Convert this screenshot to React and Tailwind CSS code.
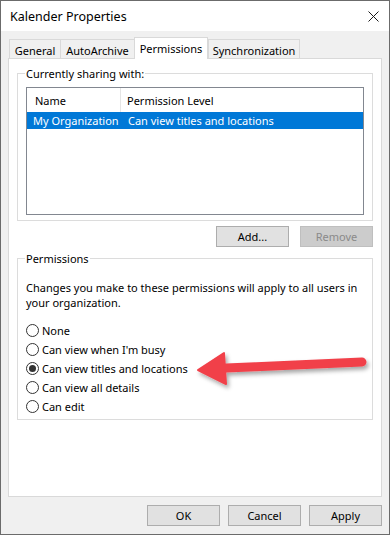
import React from 'react';

const font = { fontFamily: '"Noto Sans", "Open Sans", sans-serif' };

function Radio({ label, checked }) {
  return (
    <div className="flex items-center h-[19px] gap-[3px]">
      <span className="w-[13px] h-[13px] rounded-full border border-[#333333] bg-white flex items-center justify-center">
        {checked && <span className="w-[7px] h-[7px] rounded-full bg-[#333333]" />}
      </span>
      <span>{label}</span>
    </div>
  );
}

function Tab({ label, active, className = '' }) {
  if (active) {
    return (
      <div className={`h-[22px] -mb-px relative z-10 bg-white border border-b-0 border-[#d9d9d9] flex items-center justify-center ${className}`}>
        {label}
      </div>
    );
  }
  return (
    <div className={`h-[19px] bg-[#f0f0f0] border-t border-l border-[#d9d9d9] flex items-center justify-center pt-[2px] ${className}`}>
      {label}
    </div>
  );
}

function Btn({ children, disabled }) {
  return (
    <div
      className={`w-[73px] h-[21px] flex items-center justify-center border ${
        disabled ? 'bg-[#cccccc] border-[#bfbfbf] text-[#8a8a8a]' : 'bg-[#e1e1e1] border-[#adadad] text-black'
      }`}
    >
      {children}
    </div>
  );
}

export default function App() {
  return (
    <div
      style={font}
      className="relative w-[390px] h-[535px] border border-[#6b6b6b] bg-[#f0f0f0] flex flex-col text-[11px] text-black leading-[15px]"
    >
      {/* Title bar */}
      <div className="h-[30px] bg-white flex items-center justify-between pl-[9px] pr-[9px] shrink-0">
        <span className="text-[12.5px]">Kalender Properties</span>
        <svg width="11" height="11" viewBox="0 0 11 11" className="mr-[1px]">
          <path d="M0.5 0.5 L10.5 10.5 M10.5 0.5 L0.5 10.5" stroke="#1a1a1a" strokeWidth="1" />
        </svg>
      </div>

      {/* Tabs */}
      <div className="h-[27px] flex items-end pl-[8px] shrink-0">
        <Tab label="General" className="w-[51px]" />
        <Tab label="AutoArchive" className="w-[74px]" />
        <Tab label="Permissions" active className="w-[74px]" />
        <Tab label="Synchronization" className="w-[92px] border-r" />
      </div>

      {/* Panel */}
      <div className="mx-[7px] h-[439px] shrink-0 border border-[#d9d9d9] bg-white px-[8px] flex flex-col">
        <fieldset className="mt-[7px] border border-[#dcdcdc] px-[8px] pb-[5px]">
          <legend className="px-[1px] -ml-px">Currently sharing with:</legend>
          <div className="mt-[6px] h-[128px] border border-[#828790] bg-white flex flex-col">
            <div className="h-[24px] flex">
              <div className="w-[94px] pl-[8px] flex items-center border-r border-[#e5e5e5]">Name</div>
              <div className="pl-[6px] flex items-center">Permission Level</div>
            </div>
            <div className="h-[17px] bg-[#0078d7] text-white flex items-center">
              <div className="w-[94px] pl-[6px] whitespace-nowrap">My Organization</div>
              <div className="pl-[7px] whitespace-nowrap">Can view titles and locations</div>
            </div>
          </div>
        </fieldset>

        <div className="mt-[5px] flex justify-end gap-[11px]">
          <Btn>Add...</Btn>
          <Btn disabled>Remove</Btn>
        </div>

        <fieldset className="mt-[4px] border border-[#dcdcdc] px-[8px] pb-[3px]">
          <legend className="px-[1px] -ml-px">Permissions</legend>
          <p className="mt-[14px] whitespace-nowrap">
            Changes you make to these permissions will apply to all users in
            <br />
            your organization.
          </p>
          <div className="mt-[11px] flex flex-col">
            <Radio label="None" />
            <Radio label="Can view when I'm busy" />
            <Radio label="Can view titles and locations" checked />
            <Radio label="Can view all details" />
            <Radio label="Can edit" />
          </div>
        </fieldset>
      </div>

      {/* Bottom buttons */}
      <div className="mt-[8px] pr-[7px] flex justify-end gap-[8px] shrink-0">
        <Btn>OK</Btn>
        <Btn>Cancel</Btn>
        <Btn>Apply</Btn>
      </div>

      {/* Red annotation arrow */}
      <svg className="absolute left-[189px] top-[344px]" width="185" height="48" viewBox="0 0 185 48">
        <defs>
          <filter id="sh" x="-10%" y="-30%" width="130%" height="170%">
            <feDropShadow dx="2" dy="3" stdDeviation="2" floodColor="#000" floodOpacity="0.35" />
          </filter>
        </defs>
        <g filter="url(#sh)" fill="#f1404a" stroke="#f1404a">
          <path d="M36 23 L172 17" strokeWidth="9" strokeLinecap="round" fill="none" />
          <path d="M8 25 L34 8 L36 39 Z" strokeWidth="2" strokeLinejoin="round" />
        </g>
      </svg>
    </div>
  );
}
